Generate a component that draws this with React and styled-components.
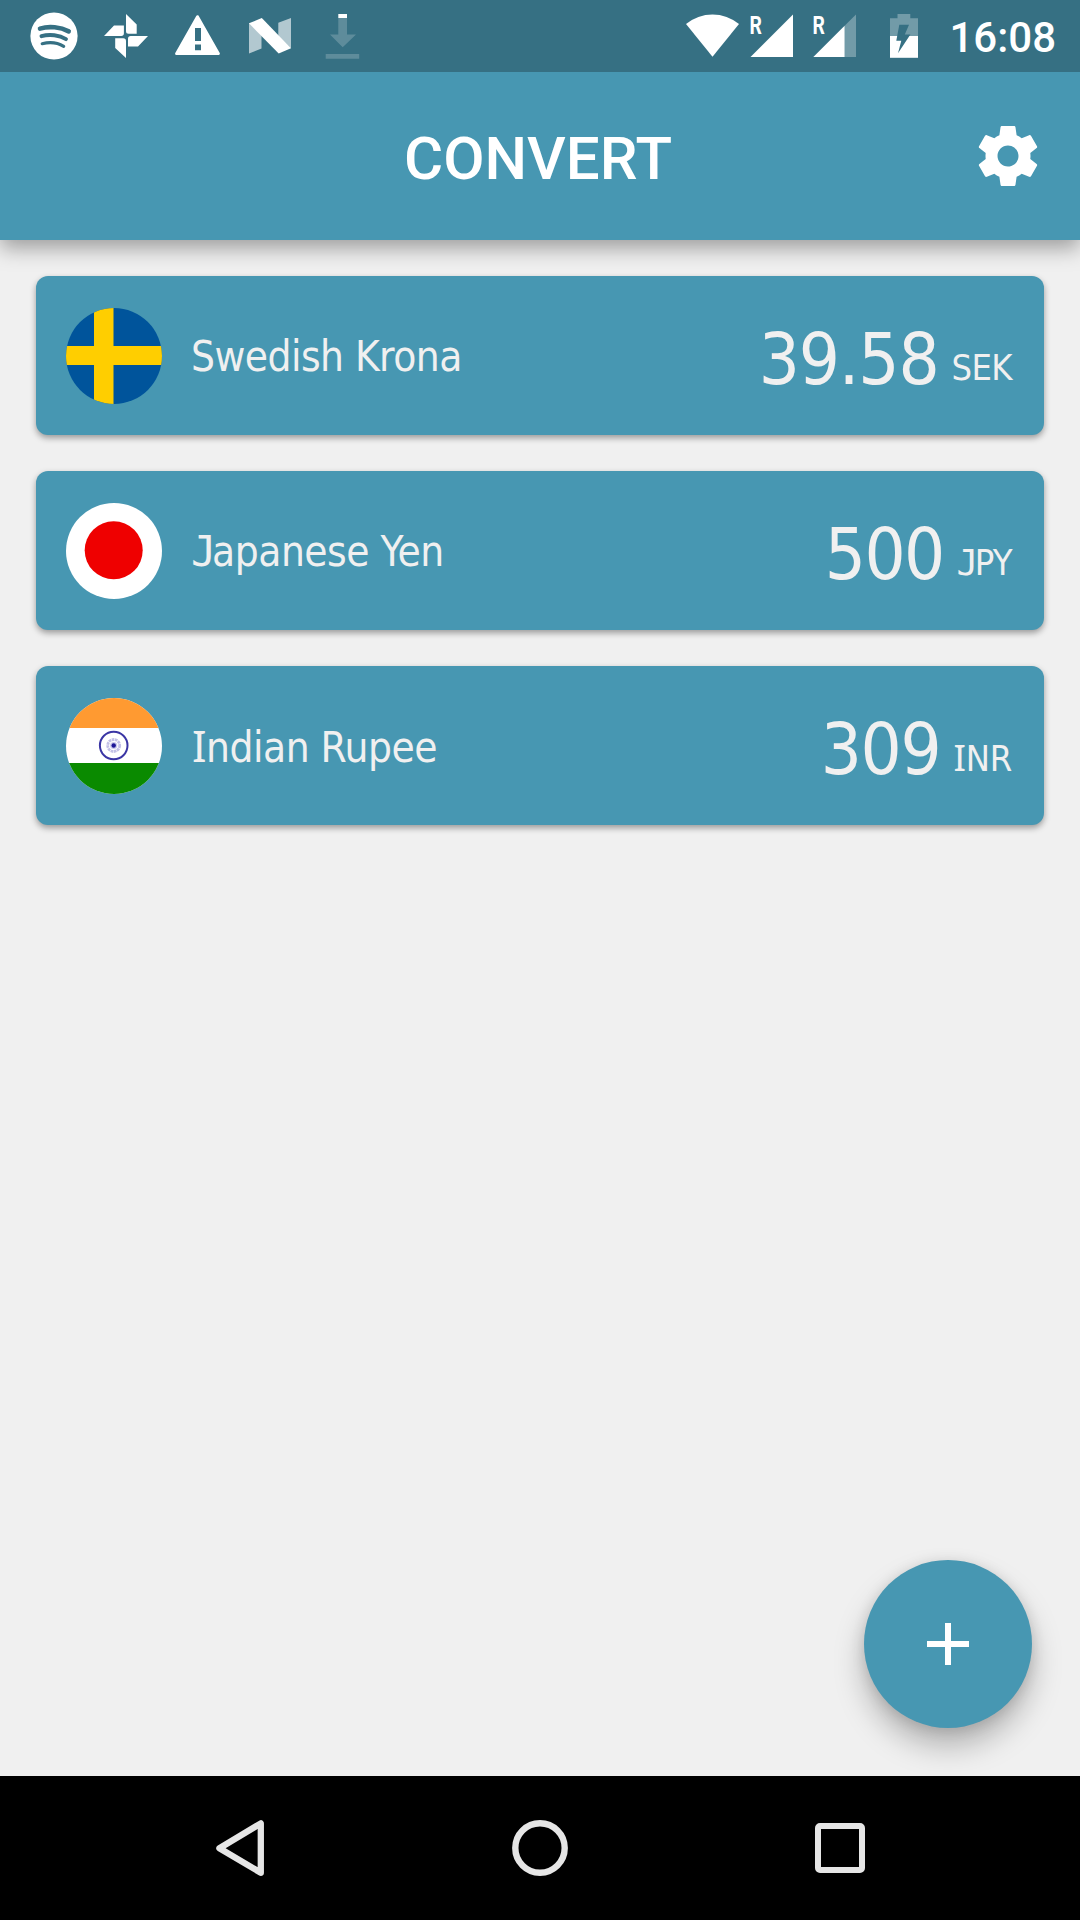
import React from "react";
import styled, { createGlobalStyle, css } from "styled-components";

const teal = "#4797b2";
const tealDark = "#367083";
const ink = "#f0f0f0";

const GlobalStyle = createGlobalStyle`
  *, *::before, *::after { box-sizing: border-box; }
  body { margin: 0; background: #f0f0f0; }
  button { border: 0; padding: 0; background: none; color: inherit; }
  svg { display: block; }
`;

const Screen = styled.div`
  position: relative;
  display: flex;
  flex-direction: column;
  width: 1080px;
  height: 1920px;
  overflow: hidden;
  background: #f0f0f0;
  font-family: Roboto, "Liberation Sans", sans-serif;
`;

const StatusBar = styled.div`
  position: relative;
  z-index: 2;
  display: flex;
  justify-content: space-between;
  flex: 0 0 72px;
  padding: 0 24px 0 30px;
  background: ${tealDark};
  color: #fff;
`;

const Notifications = styled.div`
  display: flex;
  align-items: center;
  gap: 24px;
`;

const SystemIcons = styled.div`
  display: flex;
  align-items: center;
`;

const Glyph = styled.svg`
  flex: none;
  margin-left: ${(p) => p.$before || 0}px;
`;

const Clock = styled.span`
  margin-left: 29px;
  padding-top: 3px;
  height: 72px;
  font-size: 42px;
  font-weight: 500;
  line-height: 69px;
`;

const Header = styled.header`
  position: relative;
  display: grid;
  grid-template-columns: 1fr auto 1fr;
  align-items: center;
  flex: 0 0 168px;
  padding: 0 36px;
  background: ${teal};
  color: #fff;
  box-shadow: 0 8px 20px rgba(0, 0, 0, 0.35);
`;

const Title = styled.h1`
  grid-column: 2;
  margin: 0;
  padding: 5px 4px 0 0;
  font-size: 60px;
  font-weight: 500;
  line-height: 70px;
`;

const SettingsButton = styled.button`
  justify-self: end;
  width: 72px;
  height: 72px;
`;

const List = styled.main`
  display: flex;
  flex-direction: column;
  gap: 36px;
  flex: 1;
  padding: 36px;
`;

const Card = styled.article`
  display: flex;
  align-items: center;
  height: 159px;
  padding: 0 32px 0 30px;
  border-radius: 12px;
  background: ${teal};
  color: ${ink};
  font-family: "DejaVu Sans Condensed", "DejaVu Sans", sans-serif;
  font-stretch: condensed;
  box-shadow: 0 3px 6px rgba(0, 0, 0, 0.36);
`;

const initials = {
  I: css`
    &::first-letter { font-family: "Noto Sans", sans-serif; font-size: 1.02em; }
  `,
  J: css`
    &::first-letter { font-family: "DejaVu Sans Mono", monospace; letter-spacing: -0.1em; }
  `,
};

const Flag = styled.svg`
  flex: none;
  margin-top: 1px;
`;

const Name = styled.div`
  flex: 1;
  margin-left: ${(p) => (p.$initial === "I" ? 30 : 29)}px;
  padding-top: 3px;
  font-size: 42px;
  line-height: 50px;
  letter-spacing: ${(p) => p.$track}px;
  ${(p) => initials[p.$initial]}
`;

const Amount = styled.div`
  padding-top: 6px;
  font-size: 72px;
  line-height: 84px;
  letter-spacing: ${(p) => p.$track}px;
`;

const Code = styled.div`
  margin-left: 13px;
  padding-top: 25px;
  font-size: 36px;
  line-height: 44px;
  letter-spacing: ${(p) => p.$track}px;
  ${(p) => initials[p.$initial]}
`;

const AddButton = styled.button`
  position: absolute;
  right: 48px;
  bottom: 192px;
  display: grid;
  place-items: center;
  width: 168px;
  height: 168px;
  border-radius: 50%;
  background: ${teal};
  box-shadow: 0 18px 30px rgba(0, 0, 0, 0.26), 0 2px 14px rgba(0, 0, 0, 0.12);
`;

const NavBar = styled.nav`
  display: grid;
  grid-template-columns: repeat(3, 300px);
  justify-content: center;
  flex: 0 0 144px;
  background: #000;
`;

const NavButton = styled.button`
  display: grid;
  place-items: center;
`;

const SwedenFlag = () => (
  <Flag width="96" height="96" viewBox="0 0 96 96">
    <clipPath id="se"><circle cx="48" cy="48" r="48" /></clipPath>
    <g clipPath="url(#se)">
      <rect width="96" height="96" fill="#00549b" />
      <path d="M28 0h19.5v96H28zM0 38h96v19H0z" fill="#ffce00" />
    </g>
  </Flag>
);

const JapanFlag = () => (
  <Flag width="96" height="96" viewBox="0 0 96 96">
    <circle cx="48" cy="48" r="48" fill="#fff" />
    <circle cx="47.7" cy="47.3" r="29" fill="#ef0000" />
  </Flag>
);

const IndiaFlag = () => (
  <Flag width="96" height="96" viewBox="0 0 96 96">
    <clipPath id="in"><circle cx="48" cy="48" r="48" /></clipPath>
    <g clipPath="url(#in)">
      <rect width="96" height="96" fill="#fff" />
      <rect width="96" height="30" fill="#ff9a31" />
      <rect y="65" width="96" height="31" fill="#0a8a00" />
    </g>
    <circle cx="47.7" cy="47.5" r="13.8" fill="none" stroke="#3a35a4" strokeWidth="2" />
    <circle cx="47.7" cy="47.5" r="6" fill="none" stroke="#c3c1e6" strokeWidth="2.8" strokeDasharray="2.6 0.6" />
    <circle cx="47.7" cy="47.5" r="3.6" fill="#c9c8ea" />
    <circle cx="47.7" cy="47.5" r="2.2" fill="#1c1696" />
  </Flag>
);

const rows = [
  { Flag: SwedenFlag, name: "Swedish Krona", amount: "39.58", code: "SEK", nameTrack: -0.55, amountTrack: -1.1, codeTrack: -0.6 },
  { Flag: JapanFlag, name: "Japanese Yen", amount: "500", code: "JPY", nameTrack: -0.5, amountTrack: -1.6, codeTrack: -0.6 },
  { Flag: IndiaFlag, name: "Indian Rupee", amount: "309", code: "INR", nameTrack: -0.5, amountTrack: -1.3, codeTrack: -0.2 },
];

const SignalLabel = ({ x }) => (
  <text
    transform={`translate(${x} 33.5) scale(.76 1)`}
    fontFamily="Roboto, sans-serif"
    fontSize="25.5"
    fontWeight="700"
    fill="#fff"
  >
    R
  </text>
);

export default function App() {
  return (
    <>
      <GlobalStyle />
      <Screen>
        <StatusBar>
          <Notifications>
            <Glyph width="48" height="48" viewBox="30 12 48 48">
              <circle cx="54" cy="36" r="23.6" fill="#fff" />
              <g fill="none" stroke={tealDark} strokeLinecap="round">
                <path d="M40 28.6C49 25.8 60.500 27 68.700 31.400" strokeWidth="4.600" />
                <path d="M41.500 36.200C49.500 33.900 59.500 35.100 66 39.100" strokeWidth="3.900" />
                <path d="M42.200 43.700C49.500 42 57.500 42.600 63.700 46.300" strokeWidth="3.200" />
              </g>
            </Glyph>
            <Glyph width="48" height="48" viewBox="102 12 48 48" fill="#fff">
              <path d="M126 14l10.700 10.500v9.200h-8.200q-2.500 0-2.500-2.500zM104 36l10-10.500h9.900v7.800q0 2.700-2.700 2.700zM126 58L115.200 48v-9.800h8.100q2.700 0 2.700 2.700zM148 36l-10 10.500h-10v-7.800q0-2.700 2.700-2.700z" />
            </Glyph>
            <Glyph width="48" height="48" viewBox="174 12 48 48">
              <path d="M197.500 16.500L218.600 53.700H176.400z" fill="#fff" stroke="#fff" strokeWidth="2.600" strokeLinejoin="round" />
              <path d="M195 28h6v13h-6zM195 44.600h6v5.600h-6z" fill={tealDark} />
            </Glyph>
            <Glyph width="48" height="48" viewBox="246 12 48 48" fill="#fff">
              <path d="M249 23v30.500l12.500-5V35.500L251 23zM291 18l-12.700 4.800V36L291 48.500z" opacity=".62" />
              <path d="M249 23.300L261.800 18 291 48.300 278.700 53.500z" />
            </Glyph>
            <Glyph width="48" height="48" viewBox="318 12 48 48" fill="#fff">
              <path d="M338.300 14h8.700v4h-8.700z" />
              <path d="M338.300 18h8.700v16.500h9L342.700 47.200 330 34.500h8.300zM325.700 54h33.500v4.800h-33.500z" opacity=".2" />
            </Glyph>
          </Notifications>
          <SystemIcons>
            <Glyph width="54" height="48" viewBox="686 12 54 48" fill="#fff">
              <path d="M712.500 56.700L686 24A41.800 41.800 0 0 1 739 24z" />
            </Glyph>
            <Glyph $before={6} width="48" height="68" viewBox="746 2 48 68" fill="#fff">
              <path d="M750.500 57L793 14.500V57z" />
              <SignalLabel x={749.6} />
            </Glyph>
            <Glyph $before={14} width="50" height="68" viewBox="808 2 50 68" fill="#fff">
              <path d="M813.300 57L844.600 25.700V57z" />
              <path d="M844.600 25.700L856 14.500V57h-11.400z" opacity=".3" />
              <SignalLabel x={812.6} />
            </Glyph>
            <Glyph $before={30} width="32" height="48" viewBox="888 12 32 48" fill="#fff">
              <path d="M897.500 14h12.800v4.300H918V36H890V18.300h7.500z" opacity=".3" />
              <path d="M890 36h28v21.800h-28z" />
              <path d="M899.300 24.800h9.700l-4.200 9.700h5.600L898 53.300l3.300-12.600h-5z" fill={tealDark} />
            </Glyph>
            <Clock>16:08</Clock>
          </SystemIcons>
        </StatusBar>
        <Header>
          <Title>CONVERT</Title>
          <SettingsButton aria-label="Settings">
            <svg width="72" height="72" viewBox="0 0 24 24" fill="#fff">
              <path d="M19.430 12.980c.04-.32.070-.64.070-.98s-.03-.66-.07-.98l2.110-1.650c.19-.15.240-.42.120-.64l-2-3.460c-.12-.22-.39-.3-.61-.22l-2.490 1c-.52-.4-1.080-.73-1.690-.98l-.38-2.650C14.460 2.180 14.250 2 14 2h-4c-.25 0-.46.180-.49.420l-.38 2.650c-.61.250-1.170.590-1.690.980l-2.490-1c-.23-.09-.49 0-.61.220l-2 3.460c-.13.220-.07.490.120.640l2.110 1.650c-.04.320-.07.650-.07.980s.030.660.070.980l-2.110 1.650c-.19.150-.24.420-.12.640l2 3.460c.12.220.390.300.610.220l2.490-1c.52.400 1.080.730 1.690.980l.38 2.650c.03.240.240.420.490.420h4c.25 0 .46-.18.490-.42l.38-2.650c.61-.25 1.170-.59 1.690-.98l2.490 1c.23.090.49 0 .61-.22l2-3.460c.12-.22.070-.49-.12-.64l-2.110-1.650zM12 15.500c-1.930 0-3.500-1.570-3.500-3.500s1.570-3.500 3.500-3.500 3.500 1.570 3.500 3.500-1.570 3.500-3.500 3.500z" />
            </svg>
          </SettingsButton>
        </Header>
        <List>
          {rows.map(({ Flag: RowFlag, name, amount, code, nameTrack, amountTrack, codeTrack }) => (
            <Card key={code}>
              <RowFlag />
              <Name $track={nameTrack} $initial={name[0]}>{name}</Name>
              <Amount $track={amountTrack}>{amount}</Amount>
              <Code $track={codeTrack} $initial={code[0]}>{code}</Code>
            </Card>
          ))}
        </List>
        <AddButton aria-label="Add currency">
          <svg width="42" height="42" viewBox="0 0 42 42">
            <path d="M21 0v42M0 21h42" stroke="#fff" strokeWidth="6" />
          </svg>
        </AddButton>
        <NavBar>
          <NavButton aria-label="Back">
            <svg width="48" height="56" viewBox="216 1820 48 56">
              <path d="M260.800 1823.400v49.400L219.400 1848.200z" fill="none" stroke="#e6e6e6" strokeWidth="6.300" strokeLinejoin="round" />
            </svg>
          </NavButton>
          <NavButton aria-label="Home">
            <svg width="56" height="56" viewBox="0 0 56 56">
              <circle cx="28" cy="28" r="24.700" fill="none" stroke="#e6e6e6" strokeWidth="6.400" />
            </svg>
          </NavButton>
          <NavButton aria-label="Recents">
            <svg width="50" height="50" viewBox="0 0 50 50">
              <rect x="3" y="3" width="44" height="44" rx="2" fill="none" stroke="#e6e6e6" strokeWidth="6" />
            </svg>
          </NavButton>
        </NavBar>
      </Screen>
    </>
  );
}
